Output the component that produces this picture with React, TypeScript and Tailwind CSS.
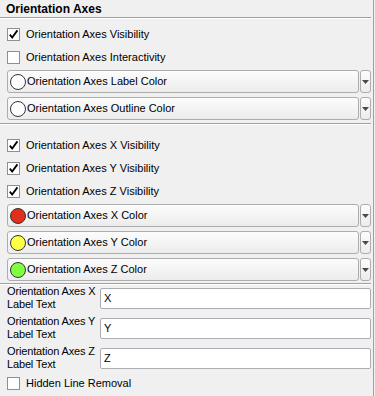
import React from "react";

/* ------------------------------ small widgets ------------------------------ */

function CheckBox({ label, checked }: { label: string; checked?: boolean }) {
  return (
    <div className="flex h-[23px] items-center pl-[7px]">
      <div className="flex h-[13px] w-[13px] items-center justify-center border border-[#8f8f8f] bg-white">
        {checked && (
          <svg width="11" height="11" viewBox="0 0 11 11">
            <path
              d="M1.8 5.6 L4.2 8.6 L9.4 1.4"
              fill="none"
              stroke="#000"
              strokeWidth="1.8"
            />
          </svg>
        )}
      </div>
      <span className="ml-[6px] text-[11px] text-black">{label}</span>
    </div>
  );
}

function ColorButton({ label, color }: { label: string; color: string }) {
  return (
    <div className="flex h-[23px] pl-[7px] pr-[2px]">
      <div className="flex flex-1 items-center rounded-[3px] border border-[#adadad] bg-gradient-to-b from-[#fcfcfc] to-[#ececec]">
        <div
          className="ml-[2px] h-[16px] w-[16px] rounded-full border border-[#333]"
          style={{ backgroundColor: color }}
        />
        <span className="ml-[1px] text-[11px] text-black">{label}</span>
      </div>
      <div className="ml-px flex w-[11px] items-center justify-center rounded-[3px] border border-[#adadad] bg-gradient-to-b from-[#fcfcfc] to-[#ececec]">
        <svg width="7" height="4" viewBox="0 0 7 4">
          <path d="M0 0 H7 L3.5 4 Z" fill="#4a4a4a" />
        </svg>
      </div>
    </div>
  );
}

function LabelEdit({ axis }: { axis: string }) {
  return (
    <div className="flex h-[26px] items-center pr-[2px]">
      <div className="w-[100px] shrink-0 whitespace-nowrap pl-[7px] text-[11px] leading-[13px] tracking-[-0.15px] text-black">
        <div>Orientation Axes {axis}</div>
        <div>Label Text</div>
      </div>
      <div className="flex h-[21px] flex-1 items-center rounded-[2px] border border-[#abadb3] bg-white pl-[3px] text-[11px] text-black">
        {axis}
      </div>
    </div>
  );
}

function Separator() {
  return (
    <div className="mr-[2px] border-b border-[#a0a0a0] shadow-[0_1px_0_#ffffff]" />
  );
}

/* ---------------------------------- panel ---------------------------------- */

export default function App() {
  return (
    <div
      className="h-[396px] w-[375px] bg-[#f0f0f0]"
      style={{ fontFamily: '"Liberation Sans", Arial, sans-serif' }}
    >
      <div className="flex h-full w-[374px] flex-col border-r border-[#a0a0a0]">
        <div className="mr-[2px] flex h-[18px] items-center border-b border-[#a0a0a0] pl-[6px] text-[12px] font-bold text-black shadow-[0_1px_0_#ffffff]">
          Orientation Axes
        </div>

        <div className="mt-[5px]">
          <CheckBox label="Orientation Axes Visibility" checked />
          <CheckBox label="Orientation Axes Interactivity" />
        </div>

        <div className="mt-[1px] flex flex-col gap-[4px]">
          <ColorButton label="Orientation Axes Label Color" color="#ffffff" />
          <ColorButton label="Orientation Axes Outline Color" color="#ffffff" />
        </div>

        <div className="mt-[3px]">
          <Separator />
        </div>

        <div className="mt-[10px]">
          <CheckBox label="Orientation Axes X Visibility" checked />
          <CheckBox label="Orientation Axes Y Visibility" checked />
          <CheckBox label="Orientation Axes Z Visibility" checked />
        </div>

        <div className="mt-[1px] flex flex-col gap-[4px]">
          <ColorButton label="Orientation Axes X Color" color="#e0301c" />
          <ColorButton label="Orientation Axes Y Color" color="#ffff44" />
          <ColorButton label="Orientation Axes Z Color" color="#80ff40" />
        </div>

        <div className="mt-[2px]">
          <Separator />
        </div>

        <div className="mt-px flex flex-col gap-[4px]">
          <LabelEdit axis="X" />
          <LabelEdit axis="Y" />
          <LabelEdit axis="Z" />
        </div>

        <div className="mt-px">
          <CheckBox label="Hidden Line Removal" />
        </div>
      </div>
    </div>
  );
}
